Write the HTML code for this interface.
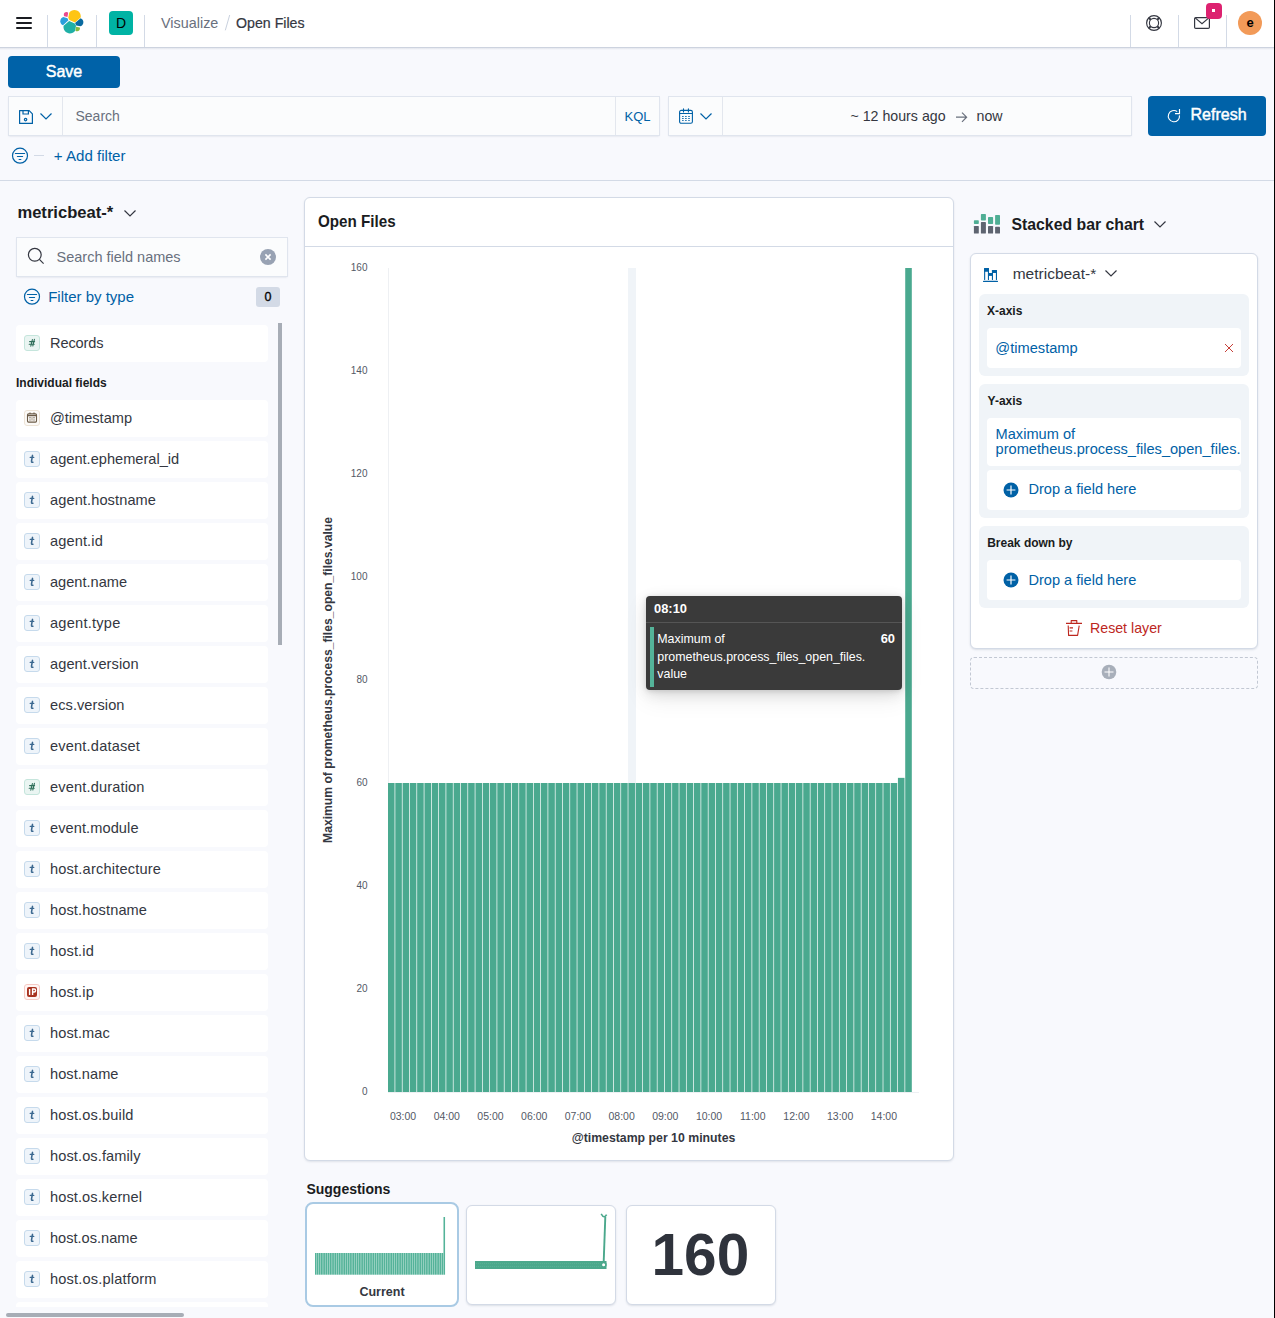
<!DOCTYPE html>
<html><head><meta charset="utf-8"><style>
*{box-sizing:border-box;margin:0;padding:0}
html,body{width:1275px;height:1318px;overflow:hidden}
body{background:#F8F9FD;font-family:"Liberation Sans",sans-serif;color:#343741;position:relative}
.a{position:absolute}
.tx{white-space:nowrap}
svg{display:block}
</style></head><body>
<div class="a" style="left:0px;top:0px;width:1274px;height:47px;background:#fff;"></div>
<div class="a" style="left:0px;top:47px;width:1274px;height:1px;background:#CDD3DF;"></div>
<div class="a" style="left:0px;top:48px;width:1274px;height:2px;background:linear-gradient(rgba(152,162,179,.22),rgba(152,162,179,0));"></div>
<div class="a" style="left:47px;top:15px;width:1px;height:32px;background:#D3DAE6;"></div>
<div class="a" style="left:96px;top:15px;width:1px;height:32px;background:#D3DAE6;"></div>
<div class="a" style="left:144px;top:15px;width:1px;height:32px;background:#D3DAE6;"></div>
<div class="a" style="left:1130px;top:15px;width:1px;height:32px;background:#D3DAE6;"></div>
<div class="a" style="left:1178px;top:15px;width:1px;height:32px;background:#D3DAE6;"></div>
<div class="a" style="left:1226px;top:15px;width:1px;height:32px;background:#D3DAE6;"></div>
<div class="a" style="left:16px;top:17.2px;width:16px;height:1.6px;background:#1a1c21;border-radius:1px;"></div>
<div class="a" style="left:16px;top:22.2px;width:16px;height:1.6px;background:#1a1c21;border-radius:1px;"></div>
<div class="a" style="left:16px;top:27.2px;width:16px;height:1.6px;background:#1a1c21;border-radius:1px;"></div>
<svg class="a" style="left:59.7px;top:9.2px" width="26.24" height="26.24" viewBox="0 0 32 32">
<path fill="#FEC514" d="M11.46 13.28l6.83 3.13 6.9-6.04a7.742 7.742 0 0 0 .15-1.52c0-4.26-3.47-7.73-7.73-7.73-2.55 0-4.93 1.26-6.37 3.37l-1.18 6.13 1.4 2.66z"/>
<path fill="#1FB0A6" d="M4.39 20.53a7.874 7.874 0 0 0-.15 1.55c0 4.28 3.48 7.75 7.76 7.75 2.57 0 4.97-1.27 6.42-3.39l1.13-5.92-1.52-2.9-6.85-3.13-6.79 6.04z"/>
<path fill="#EA4A8E" d="M4.35 8.68l4.68 1.1 1.02-5.32a3.373 3.373 0 0 0-2.04-.69 3.373 3.373 0 0 0-3.37 3.37c0 .52.12 1.06.34 1.54z"/>
<path fill="#2A9FDC" d="M3.95 9.8C1.81 10.51.33 12.56.33 14.81c0 2.19 1.36 4.15 3.4 4.94l6.57-5.94-1.21-2.58L3.95 9.8z"/>
<path fill="#86B940" d="M18.82 26.44c.61.47 1.37.73 2.14.73 1.86 0 3.38-1.52 3.38-3.38 0-.41-.07-.81-.21-1.19l-4.67-1.09-.64 4.93z"/>
<path fill="#0A6AA0" d="M19.79 19.99l5.15 1.2c2.13-.71 3.61-2.75 3.61-5.01 0-2.19-1.36-4.14-3.41-4.93l-6.74 5.91 1.39 2.83z"/>
</svg>
<div class="a" style="left:109px;top:11px;width:24px;height:24px;background:#00B3A4;border-radius:4px;"></div>
<div class="a tx" style="left:109px;top:16.35px;font-size:14px;line-height:14px;font-weight:normal;color:#000;text-align:center;width:24px;">D</div>
<div class="a tx" style="left:161px;top:16.01px;font-size:14.4px;line-height:14.4px;font-weight:normal;color:#69707D;">Visualize</div>
<svg class="a" style="left:220px;top:12px" width="14" height="22"><path d="M9.7 3 L5.3 18.3" stroke="#C9D1DE" stroke-width="1"/></svg>
<div class="a tx" style="left:236px;top:16.18px;font-size:14.2px;line-height:14.2px;font-weight:normal;color:#343741;-webkit-text-stroke:0.2px #343741;">Open Files</div>
<svg class="a" style="left:1145px;top:15px" width="18" height="18" viewBox="0 0 18 18" fill="none" stroke="#343741" stroke-width="1.15">
<circle cx="9" cy="8" r="7.4"/><circle cx="9" cy="8" r="4.6"/>
<path d="M3.9 2.9 L5.7 4.7 M14.1 2.9 L12.3 4.7 M3.9 13.1 L5.7 11.3 M14.1 13.1 L12.3 11.3" stroke-width="2"/></svg>
<svg class="a" style="left:1193px;top:16px" width="18" height="14" viewBox="0 0 18 14" fill="none" stroke="#343741" stroke-width="1.2">
<rect x="1.6" y="1.6" width="14.8" height="10.8" rx="1.2"/><path d="M2.2 1.9 L9 7.6 L15.8 1.9"/></svg>
<div class="a" style="left:1206px;top:3px;width:16px;height:16px;background:#DD2270;border-radius:4px;"></div>
<div class="a" style="left:1212.3px;top:9.3px;width:3px;height:3px;background:#fff;"></div>
<div class="a" style="left:1238px;top:11px;width:24px;height:24px;border-radius:50%;background:#F29A58"></div>
<div class="a tx" style="left:1238px;top:16.30px;font-size:13px;line-height:13px;font-weight:bold;color:#000;text-align:center;width:24px;">e</div>
<div class="a" style="left:8px;top:56px;width:112px;height:32px;background:#0062A8;border-radius:4px;"></div>
<div class="a tx" style="left:8px;top:63.86px;font-size:16px;line-height:16px;font-weight:normal;color:#fff;text-align:center;width:112px;-webkit-text-stroke:0.45px #fff;">Save</div>
<div class="a" style="left:8px;top:96px;width:652px;height:40px;background:#FBFCFD;border:1px solid #E0E5EE;box-shadow:0 1px 2px -1px rgba(152,162,179,.4)"></div>
<div class="a" style="left:62px;top:97px;width:1px;height:38px;background:#E3E7EE;"></div>
<div class="a" style="left:615px;top:97px;width:1px;height:38px;background:#E3E7EE;"></div>
<svg class="a" style="left:18px;top:109px" width="16" height="16" viewBox="0 0 16 16" fill="none" stroke="#0061A6" stroke-width="1.2">
<path d="M1.6 1.6 H11.2 L14.4 4.8 V14.4 H1.6 Z" stroke-linejoin="round"/><path d="M5 1.6 V5 H10.4 V1.6"/><circle cx="7.6" cy="10.6" r="1.2"/></svg>
<svg class="a" style="left:39px;top:110px" width="14" height="12" viewBox="0 0 14 12" fill="none" stroke="#0061A6" stroke-width="1.2">
<path d="M1.5 3.5 L7 9 L12.5 3.5"/></svg>
<div class="a tx" style="left:75.5px;top:108.95px;font-size:14px;line-height:14px;font-weight:normal;color:#69707D;">Search</div>
<div class="a tx" style="left:624.5px;top:110.20px;font-size:13px;line-height:13px;font-weight:normal;color:#0061A6;">KQL</div>
<div class="a" style="left:668px;top:96px;width:464px;height:40px;background:#FBFCFD;border:1px solid #E0E5EE;box-shadow:0 1px 2px -1px rgba(152,162,179,.4)"></div>
<div class="a" style="left:722px;top:97px;width:1px;height:38px;background:#E3E7EE;"></div>
<svg class="a" style="left:674px;top:104px" width="26" height="24" viewBox="0 0 26 24" fill="none" stroke="#0061A6" stroke-width="1.1">
<rect x="5.6" y="6.4" width="12.8" height="12.9" rx="1.6"/><path d="M5.6 9.55 H18.4 M9.5 4.9 V7.9 M14.4 4.9 V7.9" stroke-linecap="round"/>
<g fill="#0061A6" stroke="none"><rect x="8.05" y="11.95" width="1.7" height="1" rx=".4"/><rect x="8.05" y="13.95" width="1.7" height="1" rx=".4"/><rect x="8.05" y="16.00" width="1.7" height="1" rx=".4"/><rect x="11.05" y="11.95" width="1.7" height="1" rx=".4"/><rect x="11.05" y="13.95" width="1.7" height="1" rx=".4"/><rect x="11.05" y="16.00" width="1.7" height="1" rx=".4"/><rect x="14.15" y="11.95" width="1.7" height="1" rx=".4"/><rect x="14.15" y="13.95" width="1.7" height="1" rx=".4"/><rect x="14.15" y="16.00" width="1.7" height="1" rx=".4"/></g></svg>
<svg class="a" style="left:699px;top:110px" width="14" height="12" viewBox="0 0 14 12" fill="none" stroke="#0061A6" stroke-width="1.2">
<path d="M1.5 3.5 L7 9 L12.5 3.5"/></svg>
<div class="a tx" style="left:850.5px;top:109.08px;font-size:14.2px;line-height:14.2px;font-weight:normal;color:#343741;">~ 12 hours ago</div>
<svg class="a" style="left:955px;top:111px" width="13" height="12" viewBox="0 0 13 12" fill="none" stroke="#69707D" stroke-width="1.2">
<path d="M1 6.2 H11.5 M7 1.6 L11.6 6.2 L7 10.8"/></svg>
<div class="a tx" style="left:976.5px;top:109.08px;font-size:14.2px;line-height:14.2px;font-weight:normal;color:#343741;">now</div>
<div class="a" style="left:1148px;top:96px;width:118px;height:40px;background:#0062A8;border-radius:4px;"></div>
<svg class="a" style="left:1160px;top:100px" width="30" height="30" viewBox="0 0 30 30" fill="none" stroke="#fff" stroke-width="1.15">
<path d="M17.2 11.6 A5.62 5.62 0 1 0 19.45 15.3"/><path d="M19.5 9 V13.65 H15"/></svg>
<div class="a tx" style="left:1190.5px;top:107.26px;font-size:16px;line-height:16px;font-weight:normal;color:#fff;-webkit-text-stroke:0.45px #fff;">Refresh</div>
<svg class="a" style="left:11px;top:147px" width="18" height="18" viewBox="0 0 18 18" fill="none" stroke="#0061A6" stroke-width="1.2">
<circle cx="9" cy="8.7" r="7.5"/><path d="M4.4 6.5 H13.6 M6.4 9.5 H11.6 M8.1 12.5 H9.9" stroke-width="1.15" stroke-linecap="round"/></svg>
<div class="a" style="left:34px;top:154.9px;width:10px;height:1.1px;background:#D3DAE6;"></div>
<div class="a tx" style="left:53.8px;top:148.02px;font-size:15.1px;line-height:15.1px;font-weight:normal;color:#0061A6;">+ Add filter</div>
<div class="a" style="left:0px;top:180px;width:1274px;height:1px;background:#D3DAE6;"></div>
<div class="a tx" style="left:17.4px;top:205.15px;font-size:16.6px;line-height:16.6px;font-weight:bold;color:#1a1c21;">metricbeat-*</div>
<svg class="a" style="left:123px;top:207px" width="14" height="12" viewBox="0 0 14 12" fill="none" stroke="#343741" stroke-width="1.2">
<path d="M1.5 3.5 L7 9 L12.5 3.5"/></svg>
<div class="a" style="left:16px;top:237px;width:272px;height:40px;background:#FBFCFD;border:1px solid #E0E5EE;box-shadow:0 1px 2px -1px rgba(152,162,179,.4)"></div>
<svg class="a" style="left:27px;top:247px" width="18" height="18" viewBox="0 0 18 18" fill="none" stroke="#343741" stroke-width="1.2">
<circle cx="7.8" cy="7.8" r="6.4"/><path d="M12.4 12.4 L16.6 16.6"/></svg>
<div class="a tx" style="left:56.5px;top:249.53px;font-size:14.5px;line-height:14.5px;font-weight:normal;color:#69707D;">Search field names</div>
<div class="a" style="left:260px;top:249px;width:16px;height:16px;border-radius:50%;background:#98A2B3"></div>
<svg class="a" style="left:260px;top:249px" width="16" height="16" viewBox="0 0 16 16" stroke="#fff" stroke-width="1.6"><path d="M5.4 5.4 L10.6 10.6 M10.6 5.4 L5.4 10.6"/></svg>
<svg class="a" style="left:23px;top:288px" width="18" height="18" viewBox="0 0 18 18" fill="none" stroke="#0061A6" stroke-width="1.2">
<circle cx="9" cy="8.7" r="7.5"/><path d="M4.4 6.5 H13.6 M6.4 9.5 H11.6 M8.1 12.5 H9.9" stroke-width="1.15" stroke-linecap="round"/></svg>
<div class="a tx" style="left:48.2px;top:289.10px;font-size:15px;line-height:15px;font-weight:normal;color:#0061A6;">Filter by type</div>
<div class="a" style="left:256px;top:287px;width:24px;height:20px;background:#D3DAE6;border-radius:3px;"></div>
<div class="a tx" style="left:256px;top:290.62px;font-size:12.5px;line-height:12.5px;font-weight:normal;color:#000;text-align:center;width:24px;-webkit-text-stroke:0.3px #000;">0</div>
<div class="a" style="left:16px;top:325px;width:252px;height:37px;background:#fff;border-radius:4px"></div>
<div class="a" style="left:24px;top:335px;width:16px;height:16px;border-radius:3px;background:#EAF5F2;border:1px solid #C5E5DC"></div>
<svg class="a" style="left:24px;top:335px" width="16" height="16" viewBox="0 0 16 16" fill="none" stroke="#2F6F5A" stroke-width="1.1" stroke-linecap="round"><path d="M8.4 4.6 L6.8 11.2 M10.4 4.4 L8.8 11 M5.6 6.6 H10.6 M5.2 9.2 H10.2"/></svg>
<div class="a tx" style="left:50px;top:335.64px;font-size:14.6px;line-height:14.6px;font-weight:normal;color:#343741;letter-spacing:-0.135px;">Records</div>
<div class="a tx" style="left:16px;top:376.84px;font-size:12px;line-height:12px;font-weight:bold;color:#1a1c21;">Individual fields</div>
<div class="a" style="left:0;top:390px;width:300px;height:917px;overflow:hidden">
<div class="a" style="left:16px;top:10.00px;width:252px;height:37px;background:#fff;border-radius:4px"></div>
<div class="a" style="left:24px;top:20.00px;width:16px;height:16px;border-radius:3px;background:#FCFAF7;border:1px solid #EDE3D6"></div>
<svg class="a" style="left:24px;top:20.00px" width="16" height="16" viewBox="0 0 16 16" fill="none" stroke="#6B5B47" stroke-width="1.1"><rect x="3.5" y="3.9" width="9" height="8.2" rx="1"/><path d="M3.5 5.6 H12.5 M6 2.6 V3.9 M10 2.6 V3.9"/><g fill="#6B5B47" stroke="none"><rect x="5.5" y="7" width="1" height="1"/><rect x="5.5" y="9.6" width="1" height="1"/><rect x="9.5" y="7" width="1" height="1"/><rect x="9.5" y="9.6" width="1" height="1"/><rect x="7.5" y="7" width="1" height="3.6" fill="#A89A88"/><rect x="5.8" y="8" width=".4" height="1.6"/><rect x="9.8" y="8" width=".4" height="1.6"/></g></svg>
<div class="a tx" style="left:50px;top:20.64px;font-size:14.6px;line-height:14.6px;font-weight:normal;color:#343741;letter-spacing:-0.014px;">@timestamp</div>
<div class="a" style="left:16px;top:51.00px;width:252px;height:37px;background:#fff;border-radius:4px"></div>
<div class="a" style="left:24px;top:61.00px;width:16px;height:16px;border-radius:3px;background:#EEF4FA;border:1px solid #C6DAEC"></div>
<svg class="a" style="left:24px;top:61.00px" width="16" height="16" viewBox="0 0 16 16" fill="none" stroke="#3B6890" stroke-linecap="round"><path d="M8.5 4.4 L7.5 10.2 Q7.2 11.7 8.9 11.2" stroke-width="1.55"/><path d="M6.3 6.4 H9.7" stroke-width="1.4"/></svg>
<div class="a tx" style="left:50px;top:61.64px;font-size:14.6px;line-height:14.6px;font-weight:normal;color:#343741;letter-spacing:0.01px;">agent.ephemeral_id</div>
<div class="a" style="left:16px;top:92.00px;width:252px;height:37px;background:#fff;border-radius:4px"></div>
<div class="a" style="left:24px;top:102.00px;width:16px;height:16px;border-radius:3px;background:#EEF4FA;border:1px solid #C6DAEC"></div>
<svg class="a" style="left:24px;top:102.00px" width="16" height="16" viewBox="0 0 16 16" fill="none" stroke="#3B6890" stroke-linecap="round"><path d="M8.5 4.4 L7.5 10.2 Q7.2 11.7 8.9 11.2" stroke-width="1.55"/><path d="M6.3 6.4 H9.7" stroke-width="1.4"/></svg>
<div class="a tx" style="left:50px;top:102.64px;font-size:14.6px;line-height:14.6px;font-weight:normal;color:#343741;letter-spacing:0.102px;">agent.hostname</div>
<div class="a" style="left:16px;top:133.00px;width:252px;height:37px;background:#fff;border-radius:4px"></div>
<div class="a" style="left:24px;top:143.00px;width:16px;height:16px;border-radius:3px;background:#EEF4FA;border:1px solid #C6DAEC"></div>
<svg class="a" style="left:24px;top:143.00px" width="16" height="16" viewBox="0 0 16 16" fill="none" stroke="#3B6890" stroke-linecap="round"><path d="M8.5 4.4 L7.5 10.2 Q7.2 11.7 8.9 11.2" stroke-width="1.55"/><path d="M6.3 6.4 H9.7" stroke-width="1.4"/></svg>
<div class="a tx" style="left:50px;top:143.64px;font-size:14.6px;line-height:14.6px;font-weight:normal;color:#343741;letter-spacing:0.12px;">agent.id</div>
<div class="a" style="left:16px;top:174.00px;width:252px;height:37px;background:#fff;border-radius:4px"></div>
<div class="a" style="left:24px;top:184.00px;width:16px;height:16px;border-radius:3px;background:#EEF4FA;border:1px solid #C6DAEC"></div>
<svg class="a" style="left:24px;top:184.00px" width="16" height="16" viewBox="0 0 16 16" fill="none" stroke="#3B6890" stroke-linecap="round"><path d="M8.5 4.4 L7.5 10.2 Q7.2 11.7 8.9 11.2" stroke-width="1.55"/><path d="M6.3 6.4 H9.7" stroke-width="1.4"/></svg>
<div class="a tx" style="left:50px;top:184.64px;font-size:14.6px;line-height:14.6px;font-weight:normal;color:#343741;letter-spacing:-0.009px;">agent.name</div>
<div class="a" style="left:16px;top:215.00px;width:252px;height:37px;background:#fff;border-radius:4px"></div>
<div class="a" style="left:24px;top:225.00px;width:16px;height:16px;border-radius:3px;background:#EEF4FA;border:1px solid #C6DAEC"></div>
<svg class="a" style="left:24px;top:225.00px" width="16" height="16" viewBox="0 0 16 16" fill="none" stroke="#3B6890" stroke-linecap="round"><path d="M8.5 4.4 L7.5 10.2 Q7.2 11.7 8.9 11.2" stroke-width="1.55"/><path d="M6.3 6.4 H9.7" stroke-width="1.4"/></svg>
<div class="a tx" style="left:50px;top:225.64px;font-size:14.6px;line-height:14.6px;font-weight:normal;color:#343741;letter-spacing:0.233px;">agent.type</div>
<div class="a" style="left:16px;top:256.00px;width:252px;height:37px;background:#fff;border-radius:4px"></div>
<div class="a" style="left:24px;top:266.00px;width:16px;height:16px;border-radius:3px;background:#EEF4FA;border:1px solid #C6DAEC"></div>
<svg class="a" style="left:24px;top:266.00px" width="16" height="16" viewBox="0 0 16 16" fill="none" stroke="#3B6890" stroke-linecap="round"><path d="M8.5 4.4 L7.5 10.2 Q7.2 11.7 8.9 11.2" stroke-width="1.55"/><path d="M6.3 6.4 H9.7" stroke-width="1.4"/></svg>
<div class="a tx" style="left:50px;top:266.64px;font-size:14.6px;line-height:14.6px;font-weight:normal;color:#343741;letter-spacing:0.075px;">agent.version</div>
<div class="a" style="left:16px;top:297.00px;width:252px;height:37px;background:#fff;border-radius:4px"></div>
<div class="a" style="left:24px;top:307.00px;width:16px;height:16px;border-radius:3px;background:#EEF4FA;border:1px solid #C6DAEC"></div>
<svg class="a" style="left:24px;top:307.00px" width="16" height="16" viewBox="0 0 16 16" fill="none" stroke="#3B6890" stroke-linecap="round"><path d="M8.5 4.4 L7.5 10.2 Q7.2 11.7 8.9 11.2" stroke-width="1.55"/><path d="M6.3 6.4 H9.7" stroke-width="1.4"/></svg>
<div class="a tx" style="left:50px;top:307.64px;font-size:14.6px;line-height:14.6px;font-weight:normal;color:#343741;letter-spacing:0.062px;">ecs.version</div>
<div class="a" style="left:16px;top:338.00px;width:252px;height:37px;background:#fff;border-radius:4px"></div>
<div class="a" style="left:24px;top:348.00px;width:16px;height:16px;border-radius:3px;background:#EEF4FA;border:1px solid #C6DAEC"></div>
<svg class="a" style="left:24px;top:348.00px" width="16" height="16" viewBox="0 0 16 16" fill="none" stroke="#3B6890" stroke-linecap="round"><path d="M8.5 4.4 L7.5 10.2 Q7.2 11.7 8.9 11.2" stroke-width="1.55"/><path d="M6.3 6.4 H9.7" stroke-width="1.4"/></svg>
<div class="a tx" style="left:50px;top:348.64px;font-size:14.6px;line-height:14.6px;font-weight:normal;color:#343741;letter-spacing:0.181px;">event.dataset</div>
<div class="a" style="left:16px;top:379.00px;width:252px;height:37px;background:#fff;border-radius:4px"></div>
<div class="a" style="left:24px;top:389.00px;width:16px;height:16px;border-radius:3px;background:#EAF5F2;border:1px solid #C5E5DC"></div>
<svg class="a" style="left:24px;top:389.00px" width="16" height="16" viewBox="0 0 16 16" fill="none" stroke="#2F6F5A" stroke-width="1.1" stroke-linecap="round"><path d="M8.4 4.6 L6.8 11.2 M10.4 4.4 L8.8 11 M5.6 6.6 H10.6 M5.2 9.2 H10.2"/></svg>
<div class="a tx" style="left:50px;top:389.64px;font-size:14.6px;line-height:14.6px;font-weight:normal;color:#343741;letter-spacing:0.15px;">event.duration</div>
<div class="a" style="left:16px;top:420.00px;width:252px;height:37px;background:#fff;border-radius:4px"></div>
<div class="a" style="left:24px;top:430.00px;width:16px;height:16px;border-radius:3px;background:#EEF4FA;border:1px solid #C6DAEC"></div>
<svg class="a" style="left:24px;top:430.00px" width="16" height="16" viewBox="0 0 16 16" fill="none" stroke="#3B6890" stroke-linecap="round"><path d="M8.5 4.4 L7.5 10.2 Q7.2 11.7 8.9 11.2" stroke-width="1.55"/><path d="M6.3 6.4 H9.7" stroke-width="1.4"/></svg>
<div class="a tx" style="left:50px;top:430.64px;font-size:14.6px;line-height:14.6px;font-weight:normal;color:#343741;letter-spacing:0.081px;">event.module</div>
<div class="a" style="left:16px;top:461.00px;width:252px;height:37px;background:#fff;border-radius:4px"></div>
<div class="a" style="left:24px;top:471.00px;width:16px;height:16px;border-radius:3px;background:#EEF4FA;border:1px solid #C6DAEC"></div>
<svg class="a" style="left:24px;top:471.00px" width="16" height="16" viewBox="0 0 16 16" fill="none" stroke="#3B6890" stroke-linecap="round"><path d="M8.5 4.4 L7.5 10.2 Q7.2 11.7 8.9 11.2" stroke-width="1.55"/><path d="M6.3 6.4 H9.7" stroke-width="1.4"/></svg>
<div class="a tx" style="left:50px;top:471.64px;font-size:14.6px;line-height:14.6px;font-weight:normal;color:#343741;letter-spacing:0.189px;">host.architecture</div>
<div class="a" style="left:16px;top:502.00px;width:252px;height:37px;background:#fff;border-radius:4px"></div>
<div class="a" style="left:24px;top:512.00px;width:16px;height:16px;border-radius:3px;background:#EEF4FA;border:1px solid #C6DAEC"></div>
<svg class="a" style="left:24px;top:512.00px" width="16" height="16" viewBox="0 0 16 16" fill="none" stroke="#3B6890" stroke-linecap="round"><path d="M8.5 4.4 L7.5 10.2 Q7.2 11.7 8.9 11.2" stroke-width="1.55"/><path d="M6.3 6.4 H9.7" stroke-width="1.4"/></svg>
<div class="a tx" style="left:50px;top:512.64px;font-size:14.6px;line-height:14.6px;font-weight:normal;color:#343741;letter-spacing:0.105px;">host.hostname</div>
<div class="a" style="left:16px;top:543.00px;width:252px;height:37px;background:#fff;border-radius:4px"></div>
<div class="a" style="left:24px;top:553.00px;width:16px;height:16px;border-radius:3px;background:#EEF4FA;border:1px solid #C6DAEC"></div>
<svg class="a" style="left:24px;top:553.00px" width="16" height="16" viewBox="0 0 16 16" fill="none" stroke="#3B6890" stroke-linecap="round"><path d="M8.5 4.4 L7.5 10.2 Q7.2 11.7 8.9 11.2" stroke-width="1.55"/><path d="M6.3 6.4 H9.7" stroke-width="1.4"/></svg>
<div class="a tx" style="left:50px;top:553.64px;font-size:14.6px;line-height:14.6px;font-weight:normal;color:#343741;letter-spacing:0.129px;">host.id</div>
<div class="a" style="left:16px;top:584.00px;width:252px;height:37px;background:#fff;border-radius:4px"></div>
<div class="a" style="left:24px;top:594.00px;width:16px;height:16px;border-radius:3px;background:#FFF6F5;border:1px solid #F6CAC4"></div>
<svg class="a" style="left:24px;top:594.00px" width="16" height="16" viewBox="0 0 16 16"><rect x="3" y="3" width="10" height="10" rx="2" fill="#A8321F"/><path d="M5.6 5 V11 M8.6 11 V5 H10.2 Q11.6 5 11.6 6.5 Q11.6 8 10.2 8 H8.6" fill="none" stroke="#fff" stroke-width="1.4"/></svg>
<div class="a tx" style="left:50px;top:594.64px;font-size:14.6px;line-height:14.6px;font-weight:normal;color:#343741;letter-spacing:0.129px;">host.ip</div>
<div class="a" style="left:16px;top:625.00px;width:252px;height:37px;background:#fff;border-radius:4px"></div>
<div class="a" style="left:24px;top:635.00px;width:16px;height:16px;border-radius:3px;background:#EEF4FA;border:1px solid #C6DAEC"></div>
<svg class="a" style="left:24px;top:635.00px" width="16" height="16" viewBox="0 0 16 16" fill="none" stroke="#3B6890" stroke-linecap="round"><path d="M8.5 4.4 L7.5 10.2 Q7.2 11.7 8.9 11.2" stroke-width="1.55"/><path d="M6.3 6.4 H9.7" stroke-width="1.4"/></svg>
<div class="a tx" style="left:50px;top:635.64px;font-size:14.6px;line-height:14.6px;font-weight:normal;color:#343741;letter-spacing:0.085px;">host.mac</div>
<div class="a" style="left:16px;top:666.00px;width:252px;height:37px;background:#fff;border-radius:4px"></div>
<div class="a" style="left:24px;top:676.00px;width:16px;height:16px;border-radius:3px;background:#EEF4FA;border:1px solid #C6DAEC"></div>
<svg class="a" style="left:24px;top:676.00px" width="16" height="16" viewBox="0 0 16 16" fill="none" stroke="#3B6890" stroke-linecap="round"><path d="M8.5 4.4 L7.5 10.2 Q7.2 11.7 8.9 11.2" stroke-width="1.55"/><path d="M6.3 6.4 H9.7" stroke-width="1.4"/></svg>
<div class="a tx" style="left:50px;top:676.64px;font-size:14.6px;line-height:14.6px;font-weight:normal;color:#343741;letter-spacing:0.038px;">host.name</div>
<div class="a" style="left:16px;top:707.00px;width:252px;height:37px;background:#fff;border-radius:4px"></div>
<div class="a" style="left:24px;top:717.00px;width:16px;height:16px;border-radius:3px;background:#EEF4FA;border:1px solid #C6DAEC"></div>
<svg class="a" style="left:24px;top:717.00px" width="16" height="16" viewBox="0 0 16 16" fill="none" stroke="#3B6890" stroke-linecap="round"><path d="M8.5 4.4 L7.5 10.2 Q7.2 11.7 8.9 11.2" stroke-width="1.55"/><path d="M6.3 6.4 H9.7" stroke-width="1.4"/></svg>
<div class="a tx" style="left:50px;top:717.64px;font-size:14.6px;line-height:14.6px;font-weight:normal;color:#343741;letter-spacing:0.119px;">host.os.build</div>
<div class="a" style="left:16px;top:748.00px;width:252px;height:37px;background:#fff;border-radius:4px"></div>
<div class="a" style="left:24px;top:758.00px;width:16px;height:16px;border-radius:3px;background:#EEF4FA;border:1px solid #C6DAEC"></div>
<svg class="a" style="left:24px;top:758.00px" width="16" height="16" viewBox="0 0 16 16" fill="none" stroke="#3B6890" stroke-linecap="round"><path d="M8.5 4.4 L7.5 10.2 Q7.2 11.7 8.9 11.2" stroke-width="1.55"/><path d="M6.3 6.4 H9.7" stroke-width="1.4"/></svg>
<div class="a tx" style="left:50px;top:758.64px;font-size:14.6px;line-height:14.6px;font-weight:normal;color:#343741;letter-spacing:0.099px;">host.os.family</div>
<div class="a" style="left:16px;top:789.00px;width:252px;height:37px;background:#fff;border-radius:4px"></div>
<div class="a" style="left:24px;top:799.00px;width:16px;height:16px;border-radius:3px;background:#EEF4FA;border:1px solid #C6DAEC"></div>
<svg class="a" style="left:24px;top:799.00px" width="16" height="16" viewBox="0 0 16 16" fill="none" stroke="#3B6890" stroke-linecap="round"><path d="M8.5 4.4 L7.5 10.2 Q7.2 11.7 8.9 11.2" stroke-width="1.55"/><path d="M6.3 6.4 H9.7" stroke-width="1.4"/></svg>
<div class="a tx" style="left:50px;top:799.64px;font-size:14.6px;line-height:14.6px;font-weight:normal;color:#343741;letter-spacing:0.089px;">host.os.kernel</div>
<div class="a" style="left:16px;top:830.00px;width:252px;height:37px;background:#fff;border-radius:4px"></div>
<div class="a" style="left:24px;top:840.00px;width:16px;height:16px;border-radius:3px;background:#EEF4FA;border:1px solid #C6DAEC"></div>
<svg class="a" style="left:24px;top:840.00px" width="16" height="16" viewBox="0 0 16 16" fill="none" stroke="#3B6890" stroke-linecap="round"><path d="M8.5 4.4 L7.5 10.2 Q7.2 11.7 8.9 11.2" stroke-width="1.55"/><path d="M6.3 6.4 H9.7" stroke-width="1.4"/></svg>
<div class="a tx" style="left:50px;top:840.64px;font-size:14.6px;line-height:14.6px;font-weight:normal;color:#343741;letter-spacing:-0.01px;">host.os.name</div>
<div class="a" style="left:16px;top:871.00px;width:252px;height:37px;background:#fff;border-radius:4px"></div>
<div class="a" style="left:24px;top:881.00px;width:16px;height:16px;border-radius:3px;background:#EEF4FA;border:1px solid #C6DAEC"></div>
<svg class="a" style="left:24px;top:881.00px" width="16" height="16" viewBox="0 0 16 16" fill="none" stroke="#3B6890" stroke-linecap="round"><path d="M8.5 4.4 L7.5 10.2 Q7.2 11.7 8.9 11.2" stroke-width="1.55"/><path d="M6.3 6.4 H9.7" stroke-width="1.4"/></svg>
<div class="a tx" style="left:50px;top:881.64px;font-size:14.6px;line-height:14.6px;font-weight:normal;color:#343741;letter-spacing:0.173px;">host.os.platform</div>
<div class="a" style="left:16px;top:912.00px;width:252px;height:37px;background:#fff;border-radius:4px"></div>
<div class="a" style="left:24px;top:922.00px;width:16px;height:16px;border-radius:3px;background:#EEF4FA;border:1px solid #C6DAEC"></div>
<svg class="a" style="left:24px;top:922.00px" width="16" height="16" viewBox="0 0 16 16" fill="none" stroke="#3B6890" stroke-linecap="round"><path d="M8.5 4.4 L7.5 10.2 Q7.2 11.7 8.9 11.2" stroke-width="1.55"/><path d="M6.3 6.4 H9.7" stroke-width="1.4"/></svg>
<div class="a tx" style="left:50px;top:922.64px;font-size:14.6px;line-height:14.6px;font-weight:normal;color:#343741;letter-spacing:0px;">host.os.version</div>
</div>
<div class="a" style="left:278px;top:323px;width:4px;height:322px;background:#A7ADB6;"></div>
<div class="a" style="left:6px;top:1313px;width:178px;height:4px;background:#A7ADB6;border-radius:2px;"></div>
<div class="a" style="left:304px;top:197px;width:650px;height:964px;background:#fff;border:1px solid #D3DAE6;border-radius:6px;box-shadow:0 1px 2px rgba(152,162,179,.25)"></div>
<div class="a" style="left:305px;top:246px;width:648px;height:1px;background:#D3DAE6;"></div>
<div class="a tx" style="left:317.6px;top:213.02px;font-size:16.4px;line-height:16.4px;font-weight:bold;color:#1a1c21;transform:scaleX(0.927);transform-origin:0 0;">Open Files</div>
<div class="a" style="left:628px;top:268px;width:8px;height:824px;background:#F0F4F8;"></div>
<div class="a" style="left:388px;top:268px;width:1px;height:824px;background:#EEF0F3;"></div>
<div class="a" style="left:388px;top:1092px;width:531px;height:1px;background:#EEF0F3;"></div>
<svg class="a" style="left:388px;top:268px" width="525.5" height="824"><g fill="#4AA98F"><rect x="0.00" y="515.00" width="6.58" height="309.00"/><rect x="7.28" y="515.00" width="6.58" height="309.00"/><rect x="14.57" y="515.00" width="6.58" height="309.00"/><rect x="21.85" y="515.00" width="6.58" height="309.00"/><rect x="29.14" y="515.00" width="6.58" height="309.00"/><rect x="36.42" y="515.00" width="6.58" height="309.00"/><rect x="43.71" y="515.00" width="6.58" height="309.00"/><rect x="50.99" y="515.00" width="6.58" height="309.00"/><rect x="58.28" y="515.00" width="6.58" height="309.00"/><rect x="65.56" y="515.00" width="6.58" height="309.00"/><rect x="72.85" y="515.00" width="6.58" height="309.00"/><rect x="80.13" y="515.00" width="6.58" height="309.00"/><rect x="87.42" y="515.00" width="6.58" height="309.00"/><rect x="94.70" y="515.00" width="6.58" height="309.00"/><rect x="101.99" y="515.00" width="6.58" height="309.00"/><rect x="109.27" y="515.00" width="6.58" height="309.00"/><rect x="116.56" y="515.00" width="6.58" height="309.00"/><rect x="123.84" y="515.00" width="6.58" height="309.00"/><rect x="131.12" y="515.00" width="6.58" height="309.00"/><rect x="138.41" y="515.00" width="6.58" height="309.00"/><rect x="145.69" y="515.00" width="6.58" height="309.00"/><rect x="152.98" y="515.00" width="6.58" height="309.00"/><rect x="160.26" y="515.00" width="6.58" height="309.00"/><rect x="167.55" y="515.00" width="6.58" height="309.00"/><rect x="174.83" y="515.00" width="6.58" height="309.00"/><rect x="182.12" y="515.00" width="6.58" height="309.00"/><rect x="189.40" y="515.00" width="6.58" height="309.00"/><rect x="196.69" y="515.00" width="6.58" height="309.00"/><rect x="203.97" y="515.00" width="6.58" height="309.00"/><rect x="211.26" y="515.00" width="6.58" height="309.00"/><rect x="218.54" y="515.00" width="6.58" height="309.00"/><rect x="225.83" y="515.00" width="6.58" height="309.00"/><rect x="233.11" y="515.00" width="6.58" height="309.00"/><rect x="240.40" y="515.00" width="6.58" height="309.00"/><rect x="247.68" y="515.00" width="6.58" height="309.00"/><rect x="254.97" y="515.00" width="6.58" height="309.00"/><rect x="262.25" y="515.00" width="6.58" height="309.00"/><rect x="269.53" y="515.00" width="6.58" height="309.00"/><rect x="276.82" y="515.00" width="6.58" height="309.00"/><rect x="284.10" y="515.00" width="6.58" height="309.00"/><rect x="291.39" y="515.00" width="6.58" height="309.00"/><rect x="298.67" y="515.00" width="6.58" height="309.00"/><rect x="305.96" y="515.00" width="6.58" height="309.00"/><rect x="313.24" y="515.00" width="6.58" height="309.00"/><rect x="320.53" y="515.00" width="6.58" height="309.00"/><rect x="327.81" y="515.00" width="6.58" height="309.00"/><rect x="335.10" y="515.00" width="6.58" height="309.00"/><rect x="342.38" y="515.00" width="6.58" height="309.00"/><rect x="349.67" y="515.00" width="6.58" height="309.00"/><rect x="356.95" y="515.00" width="6.58" height="309.00"/><rect x="364.24" y="515.00" width="6.58" height="309.00"/><rect x="371.52" y="515.00" width="6.58" height="309.00"/><rect x="378.81" y="515.00" width="6.58" height="309.00"/><rect x="386.09" y="515.00" width="6.58" height="309.00"/><rect x="393.38" y="515.00" width="6.58" height="309.00"/><rect x="400.66" y="515.00" width="6.58" height="309.00"/><rect x="407.94" y="515.00" width="6.58" height="309.00"/><rect x="415.23" y="515.00" width="6.58" height="309.00"/><rect x="422.51" y="515.00" width="6.58" height="309.00"/><rect x="429.80" y="515.00" width="6.58" height="309.00"/><rect x="437.08" y="515.00" width="6.58" height="309.00"/><rect x="444.37" y="515.00" width="6.58" height="309.00"/><rect x="451.65" y="515.00" width="6.58" height="309.00"/><rect x="458.94" y="515.00" width="6.58" height="309.00"/><rect x="466.22" y="515.00" width="6.58" height="309.00"/><rect x="473.51" y="515.00" width="6.58" height="309.00"/><rect x="480.79" y="515.00" width="6.58" height="309.00"/><rect x="488.08" y="515.00" width="6.58" height="309.00"/><rect x="495.36" y="515.00" width="6.58" height="309.00"/><rect x="502.65" y="515.00" width="6.58" height="309.00"/><rect x="509.93" y="509.85" width="6.58" height="314.15"/><rect x="517.22" y="0.00" width="6.58" height="824.00"/></g></svg>
<div class="a tx" style="left:300px;top:1087.04px;font-size:10px;line-height:10px;font-weight:normal;color:#535966;text-align:right;width:67.5px;">0</div>
<div class="a tx" style="left:300px;top:984.03px;font-size:10px;line-height:10px;font-weight:normal;color:#535966;text-align:right;width:67.5px;">20</div>
<div class="a tx" style="left:300px;top:881.03px;font-size:10px;line-height:10px;font-weight:normal;color:#535966;text-align:right;width:67.5px;">40</div>
<div class="a tx" style="left:300px;top:778.03px;font-size:10px;line-height:10px;font-weight:normal;color:#535966;text-align:right;width:67.5px;">60</div>
<div class="a tx" style="left:300px;top:675.03px;font-size:10px;line-height:10px;font-weight:normal;color:#535966;text-align:right;width:67.5px;">80</div>
<div class="a tx" style="left:300px;top:572.03px;font-size:10px;line-height:10px;font-weight:normal;color:#535966;text-align:right;width:67.5px;">100</div>
<div class="a tx" style="left:300px;top:469.04px;font-size:10px;line-height:10px;font-weight:normal;color:#535966;text-align:right;width:67.5px;">120</div>
<div class="a tx" style="left:300px;top:366.04px;font-size:10px;line-height:10px;font-weight:normal;color:#535966;text-align:right;width:67.5px;">140</div>
<div class="a tx" style="left:300px;top:263.04px;font-size:10px;line-height:10px;font-weight:normal;color:#535966;text-align:right;width:67.5px;">160</div>
<div class="a tx" style="left:383.06944444444446px;top:1110.91px;font-size:10.5px;line-height:10.5px;font-weight:normal;color:#535966;text-align:center;width:40px;">03:00</div>
<div class="a tx" style="left:426.77777777777777px;top:1110.91px;font-size:10.5px;line-height:10.5px;font-weight:normal;color:#535966;text-align:center;width:40px;">04:00</div>
<div class="a tx" style="left:470.4861111111111px;top:1110.91px;font-size:10.5px;line-height:10.5px;font-weight:normal;color:#535966;text-align:center;width:40px;">05:00</div>
<div class="a tx" style="left:514.1944444444445px;top:1110.91px;font-size:10.5px;line-height:10.5px;font-weight:normal;color:#535966;text-align:center;width:40px;">06:00</div>
<div class="a tx" style="left:557.9027777777778px;top:1110.91px;font-size:10.5px;line-height:10.5px;font-weight:normal;color:#535966;text-align:center;width:40px;">07:00</div>
<div class="a tx" style="left:601.6111111111111px;top:1110.91px;font-size:10.5px;line-height:10.5px;font-weight:normal;color:#535966;text-align:center;width:40px;">08:00</div>
<div class="a tx" style="left:645.3194444444445px;top:1110.91px;font-size:10.5px;line-height:10.5px;font-weight:normal;color:#535966;text-align:center;width:40px;">09:00</div>
<div class="a tx" style="left:689.0277777777778px;top:1110.91px;font-size:10.5px;line-height:10.5px;font-weight:normal;color:#535966;text-align:center;width:40px;">10:00</div>
<div class="a tx" style="left:732.7361111111111px;top:1110.91px;font-size:10.5px;line-height:10.5px;font-weight:normal;color:#535966;text-align:center;width:40px;">11:00</div>
<div class="a tx" style="left:776.4444444444445px;top:1110.91px;font-size:10.5px;line-height:10.5px;font-weight:normal;color:#535966;text-align:center;width:40px;">12:00</div>
<div class="a tx" style="left:820.1527777777778px;top:1110.91px;font-size:10.5px;line-height:10.5px;font-weight:normal;color:#535966;text-align:center;width:40px;">13:00</div>
<div class="a tx" style="left:863.8611111111111px;top:1110.91px;font-size:10.5px;line-height:10.5px;font-weight:normal;color:#535966;text-align:center;width:40px;">14:00</div>
<div class="a tx" style="left:553.5px;top:1131.89px;font-size:12.3px;line-height:12.3px;font-weight:bold;color:#343741;text-align:center;width:200px;">@timestamp per 10 minutes</div>
<div class="a tx" style="left:327.5px;top:679.5px;width:0;height:0"><div style="position:absolute;left:-200px;top:-7px;width:400px;text-align:center;font-size:12.15px;line-height:14px;font-weight:bold;color:#343741;transform:rotate(-90deg);transform-origin:200px 7px">Maximum of prometheus.process_files_open_files.value</div></div>
<div class="a" style="left:646px;top:596px;width:256px;height:94px;background:#3A3A3A;border-radius:4px;box-shadow:0 1px 5px rgba(0,0,0,.12),0 3.6px 13px rgba(0,0,0,.1),0 8.4px 23px rgba(0,0,0,.08)"></div>
<div class="a" style="left:646px;top:622px;width:256px;height:1px;background:#555;"></div>
<div class="a tx" style="left:654px;top:602.68px;font-size:12.9px;line-height:12.9px;font-weight:bold;color:#fff;">08:10</div>
<div class="a" style="left:650px;top:627px;width:4px;height:60px;background:#54B399;"></div>
<div class="a tx" style="left:657.3px;top:632.70px;font-size:12.4px;line-height:12.4px;font-weight:normal;color:#fff;">Maximum of</div>
<div class="a tx" style="left:657.3px;top:650.50px;font-size:12.4px;line-height:12.4px;font-weight:normal;color:#fff;">prometheus.process_files_open_files.</div>
<div class="a tx" style="left:657.3px;top:668.30px;font-size:12.4px;line-height:12.4px;font-weight:normal;color:#fff;">value</div>
<div class="a tx" style="left:795px;top:632.98px;font-size:12.9px;line-height:12.9px;font-weight:bold;color:#fff;text-align:right;width:100px;">60</div>
<div class="a tx" style="left:306.4px;top:1181.85px;font-size:14px;line-height:14px;font-weight:bold;color:#1a1c21;">Suggestions</div>
<div class="a" style="left:304.7px;top:1202.3px;width:154px;height:104.4px;background:#fff;border:2.8px solid #A9CAE4;border-radius:8px"></div>
<svg class="a" style="left:0;top:0" width="800" height="1318"><g fill="#54B399"><rect x="315.00" y="1253" width="1.56" height="21.70"/><rect x="316.81" y="1253" width="1.56" height="21.70"/><rect x="318.62" y="1253" width="1.56" height="21.70"/><rect x="320.43" y="1253" width="1.56" height="21.70"/><rect x="322.24" y="1253" width="1.56" height="21.70"/><rect x="324.05" y="1253" width="1.56" height="21.70"/><rect x="325.86" y="1253" width="1.56" height="21.70"/><rect x="327.67" y="1253" width="1.56" height="21.70"/><rect x="329.48" y="1253" width="1.56" height="21.70"/><rect x="331.29" y="1253" width="1.56" height="21.70"/><rect x="333.10" y="1253" width="1.56" height="21.70"/><rect x="334.91" y="1253" width="1.56" height="21.70"/><rect x="336.72" y="1253" width="1.56" height="21.70"/><rect x="338.53" y="1253" width="1.56" height="21.70"/><rect x="340.34" y="1253" width="1.56" height="21.70"/><rect x="342.15" y="1253" width="1.56" height="21.70"/><rect x="343.96" y="1253" width="1.56" height="21.70"/><rect x="345.77" y="1253" width="1.56" height="21.70"/><rect x="347.57" y="1253" width="1.56" height="21.70"/><rect x="349.38" y="1253" width="1.56" height="21.70"/><rect x="351.19" y="1253" width="1.56" height="21.70"/><rect x="353.00" y="1253" width="1.56" height="21.70"/><rect x="354.81" y="1253" width="1.56" height="21.70"/><rect x="356.62" y="1253" width="1.56" height="21.70"/><rect x="358.43" y="1253" width="1.56" height="21.70"/><rect x="360.24" y="1253" width="1.56" height="21.70"/><rect x="362.05" y="1253" width="1.56" height="21.70"/><rect x="363.86" y="1253" width="1.56" height="21.70"/><rect x="365.67" y="1253" width="1.56" height="21.70"/><rect x="367.48" y="1253" width="1.56" height="21.70"/><rect x="369.29" y="1253" width="1.56" height="21.70"/><rect x="371.10" y="1253" width="1.56" height="21.70"/><rect x="372.91" y="1253" width="1.56" height="21.70"/><rect x="374.72" y="1253" width="1.56" height="21.70"/><rect x="376.53" y="1253" width="1.56" height="21.70"/><rect x="378.34" y="1253" width="1.56" height="21.70"/><rect x="380.15" y="1253" width="1.56" height="21.70"/><rect x="381.96" y="1253" width="1.56" height="21.70"/><rect x="383.77" y="1253" width="1.56" height="21.70"/><rect x="385.58" y="1253" width="1.56" height="21.70"/><rect x="387.39" y="1253" width="1.56" height="21.70"/><rect x="389.20" y="1253" width="1.56" height="21.70"/><rect x="391.01" y="1253" width="1.56" height="21.70"/><rect x="392.82" y="1253" width="1.56" height="21.70"/><rect x="394.63" y="1253" width="1.56" height="21.70"/><rect x="396.44" y="1253" width="1.56" height="21.70"/><rect x="398.25" y="1253" width="1.56" height="21.70"/><rect x="400.06" y="1253" width="1.56" height="21.70"/><rect x="401.87" y="1253" width="1.56" height="21.70"/><rect x="403.68" y="1253" width="1.56" height="21.70"/><rect x="405.49" y="1253" width="1.56" height="21.70"/><rect x="407.30" y="1253" width="1.56" height="21.70"/><rect x="409.11" y="1253" width="1.56" height="21.70"/><rect x="410.92" y="1253" width="1.56" height="21.70"/><rect x="412.73" y="1253" width="1.56" height="21.70"/><rect x="414.53" y="1253" width="1.56" height="21.70"/><rect x="416.34" y="1253" width="1.56" height="21.70"/><rect x="418.15" y="1253" width="1.56" height="21.70"/><rect x="419.96" y="1253" width="1.56" height="21.70"/><rect x="421.77" y="1253" width="1.56" height="21.70"/><rect x="423.58" y="1253" width="1.56" height="21.70"/><rect x="425.39" y="1253" width="1.56" height="21.70"/><rect x="427.20" y="1253" width="1.56" height="21.70"/><rect x="429.01" y="1253" width="1.56" height="21.70"/><rect x="430.82" y="1253" width="1.56" height="21.70"/><rect x="432.63" y="1253" width="1.56" height="21.70"/><rect x="434.44" y="1253" width="1.56" height="21.70"/><rect x="436.25" y="1253" width="1.56" height="21.70"/><rect x="438.06" y="1253" width="1.56" height="21.70"/><rect x="439.87" y="1253" width="1.56" height="21.70"/><rect x="441.68" y="1253" width="1.56" height="21.70"/><rect x="443.49" y="1217" width="1.56" height="57.70"/></g></svg>
<div class="a tx" style="left:305.5px;top:1286.42px;font-size:12.5px;line-height:12.5px;font-weight:bold;color:#343741;text-align:center;width:153px;">Current</div>
<div class="a" style="left:466px;top:1205px;width:150px;height:100px;background:#fff;border:1px solid #D3DAE6;border-radius:6px;box-shadow:0 1px 2px rgba(152,162,179,.3)"></div>
<svg class="a" style="left:460px;top:1195px" width="160" height="110"><g fill="none" stroke="#4BA88C">
<rect x="15" y="66" width="131.5" height="8" fill="#4BA88C" stroke="none"/>
<path d="M143.6 69.5 L145.3 22" stroke-width="1.9"/><path d="M141.2 18.8 Q143 22 144.2 21.8 Q145.6 21.6 146.6 19.6" stroke-width="1.6"/>
<path d="M16 68.4 H142 M16 71.6 H142" stroke="#6DBBA2" stroke-width="0.6" stroke-dasharray="0.8 1.2"/>
</g><circle cx="143.6" cy="69.7" r="2.3" fill="#fff" stroke="#4BA88C" stroke-width="1.6"/></svg>
<div class="a" style="left:626px;top:1205px;width:150px;height:100px;background:#fff;border:1px solid #D3DAE6;border-radius:6px;box-shadow:0 1px 2px rgba(152,162,179,.3)"></div>
<div class="a tx" style="left:625.4px;top:1225.98px;font-size:58.5px;line-height:58.5px;font-weight:bold;color:#2F333C;text-align:center;width:150px;">160</div>
<svg class="a" style="left:970px;top:210px" width="34" height="28" viewBox="0 0 34 28">
<g fill="#4FAE94"><rect x="3.9" y="10.3" width="4.9" height="3.6" rx=".7"/><rect x="10.9" y="4" width="5" height="6.4" rx=".7"/><rect x="18" y="7.1" width="5.1" height="6.8" rx=".7"/><rect x="25.1" y="4.9" width="4.9" height="9.9" rx=".7"/></g>
<g fill="#5E6470"><rect x="3.9" y="15.9" width="4.9" height="7.7" rx=".7"/><rect x="10.9" y="12.1" width="5" height="11.5" rx=".7"/><rect x="18" y="15.9" width="5.1" height="7.7" rx=".7"/><rect x="25.1" y="16.8" width="4.9" height="6.8" rx=".7"/></g></svg>
<div class="a tx" style="left:1011.5px;top:216.53px;font-size:15.8px;line-height:15.8px;font-weight:bold;color:#1a1c21;">Stacked bar chart</div>
<svg class="a" style="left:1153px;top:218px" width="14" height="12" viewBox="0 0 14 12" fill="none" stroke="#343741" stroke-width="1.2">
<path d="M1.5 3.5 L7 9 L12.5 3.5"/></svg>
<div class="a" style="left:970px;top:253px;width:288px;height:396px;background:#fff;border:1px solid #D3DAE6;border-radius:6px;box-shadow:0 1px 2px rgba(152,162,179,.3)"></div>
<svg class="a" style="left:978px;top:262px" width="26" height="26" viewBox="0 0 26 26">
<g fill="#0061A6"><rect x="6.1" y="5.9" width="4.9" height="3.9" rx=".5"/><rect x="6.1" y="5.9" width="1.1" height="12" rx=".5"/><rect x="9.9" y="5.9" width="1.1" height="12" rx=".5"/>
<rect x="10.4" y="11" width="4.2" height="2.9"/><rect x="14.1" y="8" width="4.9" height="3" rx=".5"/><rect x="13.9" y="8" width="1.1" height="9.9" rx=".5"/><rect x="17.9" y="8" width="1.1" height="9.9" rx=".5"/>
<rect x="5" y="18.7" width="15" height="1.3" rx=".6"/></g></svg>
<div class="a tx" style="left:1012.7px;top:266.28px;font-size:15.5px;line-height:15.5px;font-weight:normal;color:#343741;">metricbeat-*</div>
<svg class="a" style="left:1104px;top:267px" width="14" height="12" viewBox="0 0 14 12" fill="none" stroke="#343741" stroke-width="1.2">
<path d="M1.5 3.5 L7 9 L12.5 3.5"/></svg>
<div class="a" style="left:979px;top:294px;width:270px;height:82px;background:#F0F4F8;border-radius:6px;"></div>
<div class="a tx" style="left:987px;top:305.04px;font-size:12px;line-height:12px;font-weight:bold;color:#1a1c21;">X-axis</div>
<div class="a" style="left:987px;top:328px;width:254px;height:40px;background:#fff;border-radius:4px;"></div>
<div class="a tx" style="left:995.3px;top:340.60px;font-size:14.65px;line-height:14.65px;font-weight:normal;color:#0061A6;">@timestamp</div>
<svg class="a" style="left:1224px;top:343px" width="10" height="10" viewBox="0 0 10 10" stroke="#C4362E" stroke-width="0.95"><path d="M1 1 L9 9 M9 1 L1 9"/></svg>
<div class="a" style="left:979px;top:384px;width:270px;height:134px;background:#F0F4F8;border-radius:6px;"></div>
<div class="a tx" style="left:987.6px;top:394.54px;font-size:12px;line-height:12px;font-weight:bold;color:#1a1c21;">Y-axis</div>
<div class="a" style="left:987px;top:418px;width:254px;height:48px;background:#fff;border-radius:4px;"></div>
<div class="a tx" style="left:995.6px;top:426.54px;font-size:14.6px;line-height:14.6px;font-weight:normal;color:#0061A6;">Maximum of</div>
<div class="a tx" style="left:995.6px;top:442.44px;font-size:14.6px;line-height:14.6px;font-weight:normal;color:#0061A6;">prometheus.process_files_open_files.</div>
<div class="a" style="left:987px;top:470px;width:254px;height:40px;background:#fff;border-radius:4px;"></div>
<svg class="a" style="left:1003.4px;top:481.5px" width="16" height="16" viewBox="0 0 16 16"><circle cx="8" cy="8" r="7.5" fill="#0061A6"/><path d="M8 3.6 V12.4 M3.6 8 H12.4" stroke="#fff" stroke-width="1.15"/></svg>
<div class="a tx" style="left:1028.4px;top:482.24px;font-size:14.6px;line-height:14.6px;font-weight:normal;color:#0061A6;">Drop a field here</div>
<div class="a" style="left:979px;top:526px;width:270px;height:82px;background:#F0F4F8;border-radius:6px;"></div>
<div class="a tx" style="left:987.2px;top:537.34px;font-size:12px;line-height:12px;font-weight:bold;color:#1a1c21;">Break down by</div>
<div class="a" style="left:987px;top:560px;width:254px;height:40px;background:#fff;border-radius:4px;"></div>
<svg class="a" style="left:1003.4px;top:571.5px" width="16" height="16" viewBox="0 0 16 16"><circle cx="8" cy="8" r="7.5" fill="#0061A6"/><path d="M8 3.6 V12.4 M3.6 8 H12.4" stroke="#fff" stroke-width="1.15"/></svg>
<div class="a tx" style="left:1028.4px;top:573.44px;font-size:14.6px;line-height:14.6px;font-weight:normal;color:#0061A6;">Drop a field here</div>
<svg class="a" style="left:1060px;top:610px" width="30" height="30" viewBox="0 0 30 30" fill="none" stroke="#BD271E" stroke-width="1.1" stroke-linejoin="round">
<path d="M6 13.4 H22 M11.2 13.2 V10.6 H16.8 V13.2 M8.2 15.6 L8.6 25.4 H17.6 L19.2 15.6 M9.6 17.9 H13 M9.6 21 H12.4"/></svg>
<div class="a tx" style="left:1090px;top:621.18px;font-size:14.2px;line-height:14.2px;font-weight:normal;color:#BD271E;">Reset layer</div>
<div class="a" style="left:970px;top:657px;width:288px;height:32px;border:1px dashed #C2C8D3;border-radius:4px"></div>
<svg class="a" style="left:1101.4px;top:664.3px" width="16" height="16" viewBox="0 0 16 16"><circle cx="8" cy="8" r="7.3" fill="#A8AFBA"/><path d="M8 3.5 V12.5 M3.5 8 H12.5" stroke="#fff" stroke-width="1.05"/></svg>
<div class="a" style="left:1274px;top:0px;width:1px;height:1318px;background:#000;"></div>
</body></html>
